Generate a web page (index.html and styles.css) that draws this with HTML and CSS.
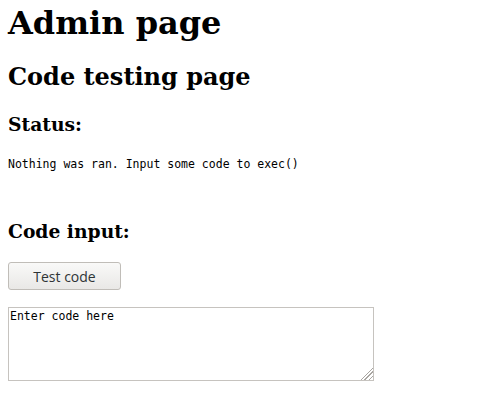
FILE: index.html
```html
<!DOCTYPE html>
<html>
<head>
<meta charset="utf-8">
<title>Admin page</title>
<link rel="stylesheet" href="styles.css">
</head>
<body class="page">
<h1 class="title">Admin page</h1>
<h2 class="subtitle">Code testing page</h2>
<h3 class="section status-head">Status:</h3>
<pre class="status">Nothing was ran. Input some code to exec()</pre>
<h3 class="section input-head">Code input:</h3>
<button class="test-btn" type="button">Test code</button>
<textarea class="code" cols="50" rows="4">Enter code here</textarea>
</body>
</html>
```

FILE: styles.css
```css
html, body { margin: 0; padding: 0; }
.page {
  padding: 0 8px 8px;
  font-family: "DejaVu Serif", serif;
  color: #000;
  background: #fff;
}
.title { font-size: 32px; margin: 4px 0 20px; line-height: normal; }
.subtitle { font-size: 24px; margin: 0 0 22px; line-height: normal; }
.section { font-size: 18.72px; line-height: normal; }
.status-head { margin: 0 0 22px; }
.input-head { margin: 0 0 20px; }
.status {
  font-family: "DejaVu Sans Mono", monospace;
  font-size: 11.5px;
  line-height: normal;
  margin: 0 0 49px;
}
.test-btn {
  display: block;
  font-family: "Open Sans", sans-serif;
  font-size: 14px;
  width: 113px;
  height: 28px;
  margin: 0 0 17px;
  padding: 0;
  border: 1px solid #c0bdb8;
  border-radius: 3px;
  background: linear-gradient(#f9f9f8, #e9e8e6);
  color: #2e3436;
}
.code {
  display: block;
  font-family: "DejaVu Sans Mono", monospace;
  font-size: 11.5px;
  width: 366px;
  height: 74px;
  box-sizing: border-box;
  border: 1px solid #c6c3bf;
  padding: 1px;
  margin: 0;
  resize: none;
  color: #000;
  background-color: #fff;
  background-image:
    linear-gradient(to bottom right, #fff 50%, transparent 50%),
    repeating-linear-gradient(135deg, #a9a6a2 0 1.1px, #fff 1.1px 3px);
  background-size: 13px 13px, 13px 13px;
  background-position: right 0 bottom 0, right 0 bottom 0;
  background-repeat: no-repeat;
}
```
